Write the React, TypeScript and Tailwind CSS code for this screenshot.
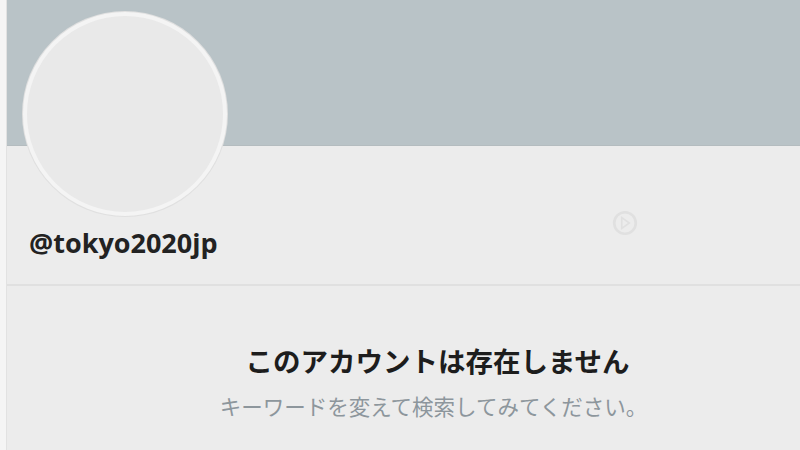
export default function App() {
  return (
    <div
      className="flex h-[450px] w-[800px] overflow-hidden bg-[#f3f3f3]"
      style={{ fontFamily: '"Noto Sans", "Noto Sans CJK JP", sans-serif' }}
    >
      {/* left gutter */}
      <div className="w-[7px] shrink-0 border-r border-[#e2e2e2] bg-[#f5f5f5]" />

      <div className="relative flex flex-1 flex-col bg-[#ececec]">
        {/* banner */}
        <div className="h-[146px] shrink-0 border-b border-[#b4bcbf] bg-[#b9c3c7]" />

        {/* avatar */}
        <div className="absolute left-[16px] top-[12px] h-[204px] w-[204px] rounded-full border-[4px] border-[#f4f4f4] bg-[#e9e9e9] shadow-[0_0_0_1px_#e0e0e0]" />

        {/* profile row */}
        <div className="flex h-[140px] shrink-0 items-end border-b-2 border-[#e0e0e0] px-[22px] pb-[28px]">
          <span
            className="text-[27px] font-bold leading-none text-[#222]"
            style={{ fontFamily: '"Open Sans", "DejaVu Sans", sans-serif' }}
          >
            @tokyo2020jp
          </span>
          <svg
            className="ml-auto mr-[139px] mt-[63px] self-start"
            width="28"
            height="28"
            viewBox="0 0 26 26"
            fill="none"
            stroke="#e0e0e0"
            strokeWidth="2.5"
          >
            <circle cx="13" cy="13" r="10" />
            <path d="M10 8v10l7-5z" strokeWidth="1.5" />
          </svg>
        </div>

        {/* message */}
        <div className="flex flex-1 flex-col items-center pt-[62px]">
          <h1 className="pl-[68px] text-[27.5px] font-bold leading-none text-[#1d1d1d]">
            このアカウントは存在しません
          </h1>
          <p className="mt-[20px] pl-[60px] text-[21.5px] leading-none text-[#8d969c]">
            キーワードを変えて検索してみてください。
          </p>
        </div>
      </div>
    </div>
  )
}
